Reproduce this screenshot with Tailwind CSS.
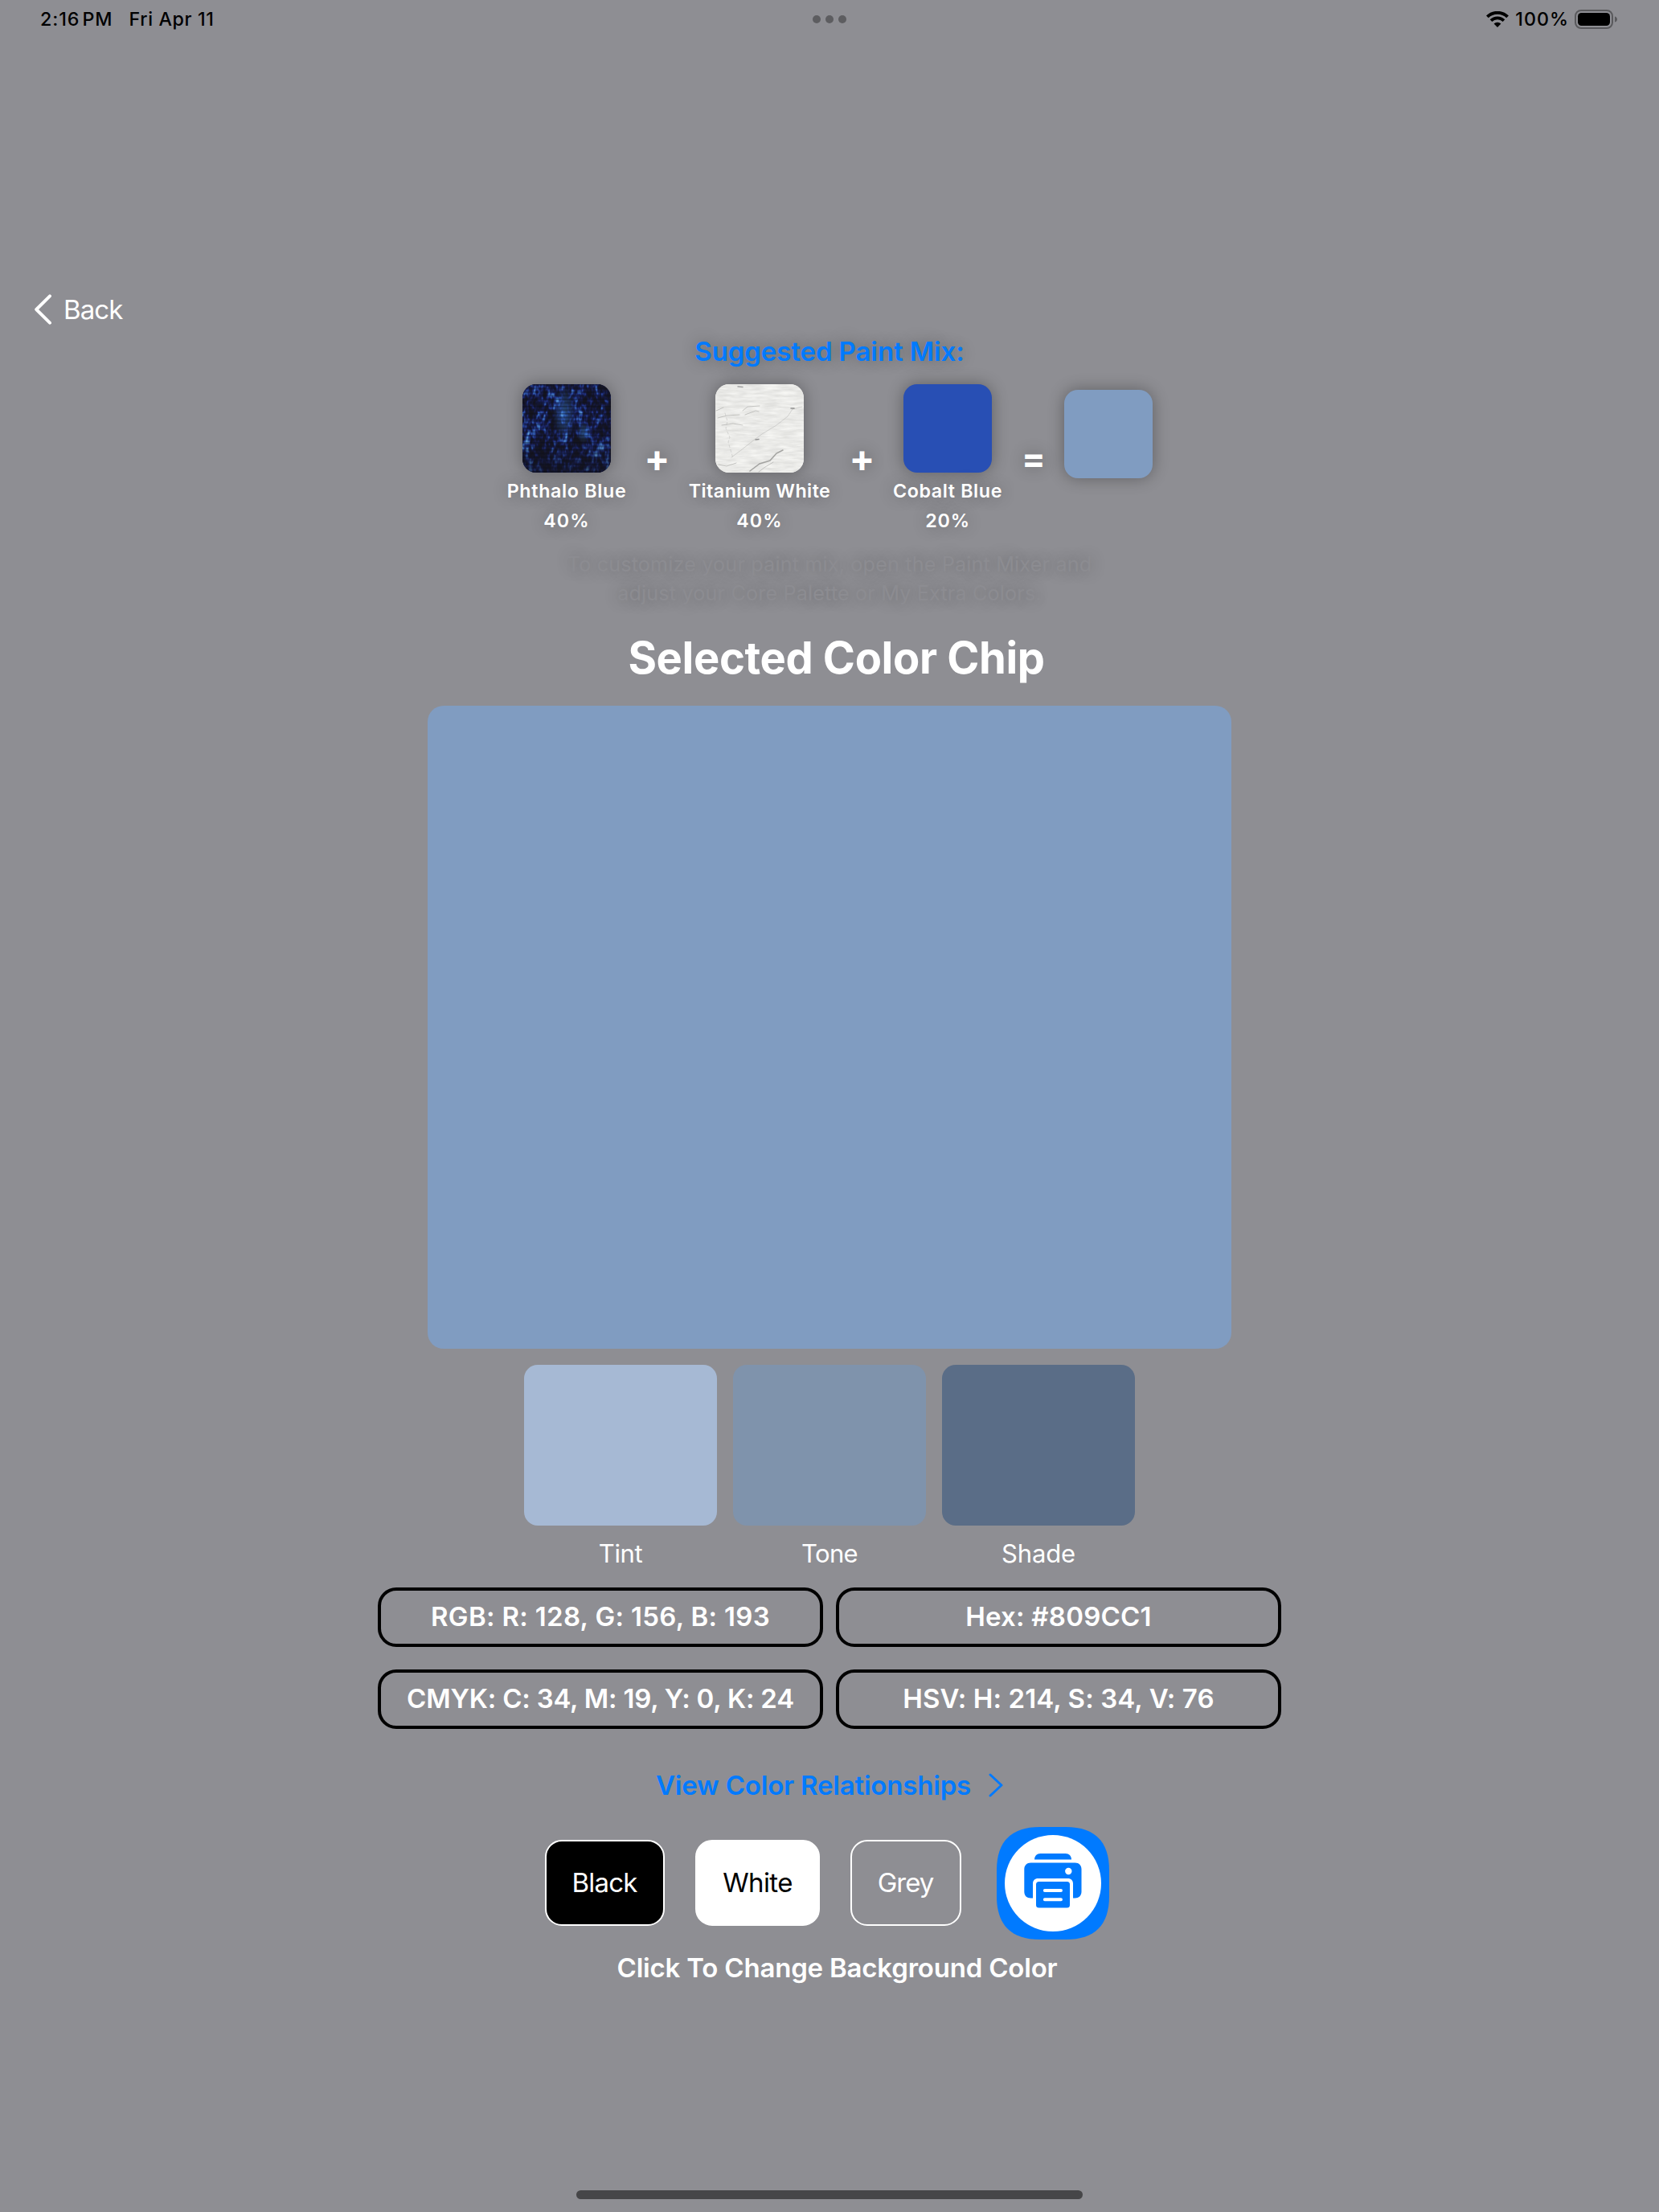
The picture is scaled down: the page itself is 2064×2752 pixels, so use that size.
<!DOCTYPE html>
<html lang="en">
<head>
<meta charset="utf-8">
<title>Selected Color Chip</title>
<script src="https://cdn.jsdelivr.net/npm/@tailwindcss/browser@4"></script>
</head>
<body class="bg-[#8e8e93]">
<div class="flex h-[2752px] w-[2064px] flex-col items-center overflow-hidden bg-[#8e8e93] font-['Inter',sans-serif] text-white">

  <!-- Status bar -->
  <header class="relative flex h-[47px] w-full shrink-0 items-center justify-between pr-[52px] pl-[50px] text-[23.25px] leading-[47px] font-medium text-black">
    <div class="flex gap-[20px]">
      <span class="tracking-[0.04em] [word-spacing:-4px]">2:16 PM</span>
      <span class="tracking-[0.027em]">Fri Apr 11</span>
    </div>
    <div class="absolute top-[19px] left-[1011px] flex gap-[6px]">
      <span class="size-[10px] rounded-full bg-[#5d5d60]"></span>
      <span class="size-[10px] rounded-full bg-[#5d5d60]"></span>
      <span class="size-[10px] rounded-full bg-[#5d5d60]"></span>
    </div>
    <div class="flex items-center">
      <svg class="mr-[8px] h-[20px] w-[28px]" viewBox="0 0 28 20" fill="none" stroke="#000">
        <path d="M1.4 6.9A18 18 0 0 1 26.6 6.9" stroke-width="3.9"/>
        <path d="M6 11.6A11.3 11.3 0 0 1 22 11.6" stroke-width="3.7"/>
        <path d="M14 20L9.6 15.5A6.2 6.2 0 0 1 18.4 15.5Z" fill="#000" stroke="none"/>
      </svg>
      <span class="mr-[7px] tracking-[0.043em]">100%</span>
      <svg class="h-[24px] w-[53px]" viewBox="0 0 53 24">
        <rect x="1" y="1" width="46" height="22" rx="7" fill="none" stroke="#59595c" stroke-width="2"/>
        <rect x="4" y="4" width="40" height="16" rx="4.5" fill="#000"/>
        <path d="M50 8.5C52 9 53 10.500 53 12S52 15 50 15.500Z" fill="#59595c"/>
      </svg>
    </div>
  </header>

  <!-- Back navigation -->
  <nav class="mt-[316px] flex h-11 w-full shrink-0 items-center pl-[43px]">
    <svg class="h-[38px] w-[21px]" viewBox="0 0 21 38" fill="none" stroke="#fff" stroke-width="3.9" stroke-linecap="round" stroke-linejoin="round"><path d="M19 2.300L2.200 19L19 35.700"/></svg>
    <span class="ml-[15px] text-[33px] leading-[40px] tracking-[-0.028em]">Back</span>
  </nav>

  <!-- Suggested mix -->
  <h2 class="mt-[10px] text-[33px] leading-[40px] font-semibold tracking-[-0.0031em] text-[#007aff] [text-shadow:0_0_20px_rgba(0,0,0,0.33)]">Suggested Paint Mix:</h2>

  <section class="mt-[21px] flex h-[184px] shrink-0 items-start gap-5 text-[23.25px] leading-[29px] font-semibold [text-shadow:0_0_20px_rgba(0,0,0,0.33)]">
    <div class="flex w-[150px] flex-col items-center gap-2 whitespace-nowrap">
      <div class="size-[110px] overflow-hidden rounded-[17px] bg-[#14183c] shadow-[0_0_20px_rgba(0,0,0,0.33)]">
        <svg class="size-full" viewBox="0 0 110 110">
          <filter id="phthalo" x="0" y="0" width="100%" height="100%" color-interpolation-filters="sRGB">
            <feTurbulence type="fractalNoise" baseFrequency="0.23 0.12" numOctaves="2" seed="11"/>
            <feColorMatrix values="1 0 0 0 0  1 0 0 0 0  1 0 0 0 0  0 0 0 0 1" result="fine"/>
            <feTurbulence type="fractalNoise" baseFrequency="0.05 0.03" numOctaves="2" seed="7"/>
            <feColorMatrix values="1 0 0 0 0  1 0 0 0 0  1 0 0 0 0  0 0 0 0 1" result="coarse"/>
            <feComposite in="fine" in2="coarse" operator="arithmetic" k2="0.85" k3="0.7" k4="-0.3"/>
            <feComponentTransfer>
              <feFuncR type="table" tableValues=".08 .08 .08 .08 .08 .09 .12 .18 .3 .45 .6"/>
              <feFuncG type="table" tableValues=".08 .08 .08 .08 .09 .11 .18 .34 .52 .68 .8"/>
              <feFuncB type="table" tableValues=".11 .11 .12 .14 .19 .29 .48 .66 .80 .9 .95"/>
            </feComponentTransfer>
          </filter>
          <pattern id="weave" width="6" height="4.500" patternUnits="userSpaceOnUse"><rect width="6" height="1.500" fill="#0b0c1a" opacity=".4"/></pattern>
          <radialGradient id="glow"><stop stop-color="#3f86d8" stop-opacity=".5"/><stop offset="1" stop-color="#3f86d8" stop-opacity="0"/></radialGradient>
          <linearGradient id="fade" x2="0" y2="1"><stop offset=".6" stop-color="#12131f" stop-opacity="0"/><stop offset="1" stop-color="#12131f" stop-opacity=".55"/></linearGradient>
          <rect width="110" height="110" filter="url(#phthalo)"/>
          <ellipse cx="52" cy="36" rx="14" ry="34" fill="url(#glow)"/>
          <ellipse cx="76" cy="60" rx="9" ry="13" fill="url(#glow)"/>
          <rect width="110" height="110" fill="url(#fade)"/>
          <rect width="110" height="110" fill="url(#weave)"/>
        </svg>
      </div>
      <span class="tracking-[0.0293em]">Phthalo Blue</span>
      <span class="tracking-[0.045em]">40%</span>
    </div>
    <span class="mt-[68px] w-[35px] text-center text-[47px] leading-[48px] font-bold">+</span>
    <div class="flex w-[180px] flex-col items-center gap-2 whitespace-nowrap">
      <div class="size-[110px] overflow-hidden rounded-[17px] bg-[#ebebea] shadow-[0_0_20px_rgba(0,0,0,0.33)]">
        <svg class="size-full" viewBox="0 0 110 110" fill="none" stroke-linecap="round">
          <filter id="titanium" x="0" y="0" width="100%" height="100%" color-interpolation-filters="sRGB">
            <feTurbulence type="fractalNoise" baseFrequency="0.05 0.3" numOctaves="3" seed="4"/>
            <feColorMatrix values=".14 0 0 0 .85  .14 0 0 0 .85  .14 0 0 0 .84  0 0 0 0 1"/>
          </filter>
          <rect width="110" height="110" filter="url(#titanium)"/>
          <g stroke="#b4b4b2" stroke-width="1" stroke-opacity=".75">
            <path d="M28 3L34 3.500" stroke="#888" stroke-width="1.500"/>
            <path d="M34 33L40 28L55 27M37 38L50 33L54 34M1 33L10 29M3 42L14 39L30 38M8 51L22 49L34 51"/>
            <path d="M20 91L32 82L46 71L58 62L76 51L90 40L96 31M96 31L108 28" stroke-opacity=".5"/>
            <path d="M12 36L15 46L13 55L18 66L16 72L22 92" stroke-opacity=".45" stroke-dasharray="3 3"/>
            <path d="M4 100L14 102L26 98"/>
            <path d="M50 69L54 68.500M94 30L98 30" stroke="#777" stroke-width="1.500"/>
            <path d="M43 108L55 99L68 95L76 86L84 82" stroke="#8c8c8a" stroke-width="1.500"/>
            <path d="M54 109L62 103L72 97"/>
          </g>
        </svg>
      </div>
      <span class="tracking-[0.0197em]">Titanium White</span>
      <span class="tracking-[0.045em]">40%</span>
    </div>
    <span class="mt-[68px] w-[35px] text-center text-[47px] leading-[48px] font-bold">+</span>
    <div class="flex w-[138px] flex-col items-center gap-2 whitespace-nowrap">
      <div class="size-[110px] rounded-[17px] bg-[#284fb4] shadow-[0_0_20px_rgba(0,0,0,0.33)]"></div>
      <span class="tracking-[0.0266em]">Cobalt Blue</span>
      <span class="tracking-[0.036em]">20%</span>
    </div>
    <span class="mt-[68px] w-[36px] text-center text-[44px] leading-[48px] font-bold">=</span>
    <div class="mt-[7px] size-[110px] rounded-[17px] bg-[#809cc1] shadow-[0_0_20px_rgba(0,0,0,0.33)]"></div>
  </section>

  <p class="mt-[22px] text-center text-[25.2px] leading-[36px] tracking-[0.006em] whitespace-nowrap text-[#8c8c91] [text-shadow:0_0_20px_rgba(0,0,0,0.33)]">To customize your paint mix, open the Paint Mixer and<br>adjust your Core Palette or My Extra Colors.</p>

  <!-- Selected chip with its variations -->
  <h1 class="mt-[29px] pl-[17px] text-[54.3px] leading-[66px] font-bold tracking-[-0.0066em]">Selected Color Chip</h1>
  <div class="mt-[27px] h-[800px] w-[1000px] shrink-0 rounded-[20px] bg-[#809cc1]"></div>

  <div class="mt-5 flex shrink-0 gap-5 text-center text-[31px] leading-[38px]">
    <div class="flex w-[240px] flex-col gap-4">
      <div class="h-[200px] rounded-[17px] bg-[#a6b9d4]"></div>
      <span class="tracking-[-0.0133em]">Tint</span>
    </div>
    <div class="flex w-[240px] flex-col gap-4">
      <div class="h-[200px] rounded-[17px] bg-[#7f93ac]"></div>
      <span class="tracking-[-0.0193em]">Tone</span>
    </div>
    <div class="flex w-[240px] flex-col gap-4">
      <div class="h-[200px] rounded-[17px] bg-[#5a6d87]"></div>
      <span class="tracking-[-0.0049em]">Shade</span>
    </div>
  </div>

  <!-- Colour values -->
  <div class="mt-[23px] grid shrink-0 grid-cols-[554px_554px] grid-rows-[74px_74px] gap-x-4 gap-y-7 text-[33px] leading-[40px] font-semibold whitespace-nowrap">
    <div class="flex items-center justify-center rounded-[23px] border-4 border-black pb-[3px] tracking-[0.0096em]">RGB: R: 128, G: 156, B: 193</div>
    <div class="flex items-center justify-center rounded-[23px] border-4 border-black pb-[3px] tracking-[0.0066em]">Hex: #809CC1</div>
    <div class="flex items-center justify-center rounded-[23px] border-4 border-black pb-[3px] tracking-[-0.0065em]">CMYK: C: 34, M: 19, Y: 0, K: 24</div>
    <div class="flex items-center justify-center rounded-[23px] border-4 border-black pb-[3px] tracking-[0.0034em]">HSV: H: 214, S: 34, V: 76</div>
  </div>

  <a class="mt-[50px] flex shrink-0 items-center gap-[22px] text-[33px] leading-[40px] font-semibold tracking-[-0.006em] text-[#007aff]">
    View Color Relationships
    <svg class="h-[30px] w-[18px]" viewBox="0 0 18 30" fill="none" stroke="currentColor" stroke-width="3" stroke-linecap="round" stroke-linejoin="round"><path d="M2 2L16 15L2 28"/></svg>
  </a>

  <!-- Background choices and print -->
  <div class="mt-8 flex h-[140px] shrink-0 items-start pr-[6px] text-[33px] leading-[40px]">
    <button class="mt-4 h-[107px] w-[149px] rounded-[21px] border-2 border-white bg-black pr-px pb-[2px] tracking-[-0.0255em]">Black</button>
    <button class="mt-4 ml-[38px] h-[107px] w-[155px] rounded-[21px] border-2 border-white bg-white pb-[2px] tracking-[-0.0189em] text-black">White</button>
    <button class="mt-4 ml-[38px] h-[107px] w-[138px] rounded-[21px] border-2 border-white pr-px pb-[2px] tracking-[-0.0302em]">Grey</button>
    <svg class="ml-[44px] size-[140px]" viewBox="0 0 140 140">
      <path fill="#007aff" d="M54 0H86C122 0 140 18 140 54V86C140 122 122 140 86 140H54C18 140 0 122 0 86V54C0 18 18 0 54 0Z"/>
      <circle cx="70" cy="70" r="60" fill="#fff"/>
      <g fill="#007aff">
        <path d="M47 40.500C47 36 50 33 54.500 33H85.500C90 33 93 36 93 40.500Z"/>
        <path d="M42.500 44.500H97.500C102.500 44.500 105.500 48 105.500 52.500V80.500C105.500 85.500 102 88.500 97.500 88.500H95V70.500C95 66.500 92.500 64 88.500 64H51.500C47.500 64 45 66.500 45 70.500V88.500H42.500C37.500 88.500 34.300 85.500 34.300 80.500V52.500C34.300 48 37.500 44.500 42.500 44.500Z"/>
        <rect x="49" y="68" width="42" height="32.500" rx="3.500"/>
      </g>
      <circle cx="89.300" cy="55" r="4.200" fill="#fff"/>
      <path d="M59.800 79H80M59.800 90.200H80" stroke="#fff" stroke-width="3.900" stroke-linecap="round"/>
    </svg>
  </div>

  <p class="mt-[15px] pl-[19px] text-[33px] leading-[40px] font-semibold tracking-[-0.006em]">Click To Change Background Color</p>

  <!-- Home indicator -->
  <div class="mt-auto mb-[16px] h-[11px] w-[630px] shrink-0 rounded-full bg-[#464648]"></div>
</div>
</body>
</html>
